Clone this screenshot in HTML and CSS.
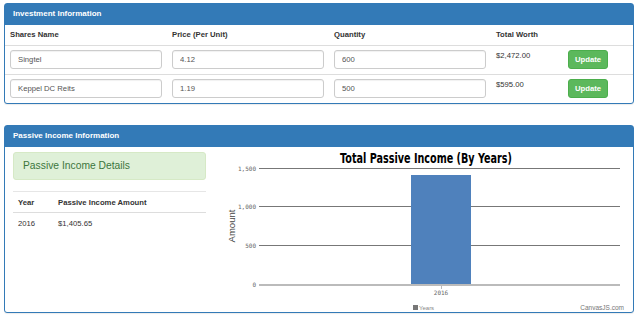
FILE: index.html
```html
<!DOCTYPE html>
<html lang="en">
<head>
    <meta charset="UTF-8">
    <meta name="viewport" content="width=device-width, initial-scale=1.0">
    <title>Investment</title>
    <link rel="stylesheet" href="styles.css">
</head>
<body>
    <div class="panel">
        <div class="panel-heading">Investment Information</div>
        <table class="invest">
            <colgroup>
                <col class="c-wide"><col class="c-wide"><col class="c-wide"><col class="c-worth"><col>
            </colgroup>
            <thead>
                <tr>
                    <th>Shares Name</th>
                    <th>Price (Per Unit)</th>
                    <th>Quantity</th>
                    <th>Total Worth</th>
                    <th></th>
                </tr>
            </thead>
            <tbody>
                <tr>
                    <td><input type="text" value="Singtel"></td>
                    <td><input type="text" value="4.12"></td>
                    <td><input type="text" value="600"></td>
                    <td>$2,472.00</td>
                    <td><button type="button">Update</button></td>
                </tr>
                <tr>
                    <td><input type="text" value="Keppel DC Reits"></td>
                    <td><input type="text" value="1.19"></td>
                    <td><input type="text" value="500"></td>
                    <td>$595.00</td>
                    <td><button type="button">Update</button></td>
                </tr>
            </tbody>
        </table>
    </div>

    <div class="panel">
        <div class="panel-heading">Passive Income Information</div>
        <div class="panel-body">
            <div class="details">
                <div class="alert">Passive Income Details</div>
                <table class="income">
                    <thead>
                        <tr><th class="year">Year</th><th>Passive Income Amount</th></tr>
                    </thead>
                    <tbody>
                        <tr><td>2016</td><td>$1,405.65</td></tr>
                    </tbody>
                </table>
            </div>
            <div class="chart">
                <svg width="403" height="160" viewBox="0 0 403 160">
                    <text class="chart-title" x="204" y="10.5" text-anchor="middle" textLength="172" lengthAdjust="spacingAndGlyphs">Total Passive Income (By Years)</text>

                    <g stroke="#777" stroke-width="1">
                        <line x1="37" x2="398" y1="16.5" y2="16.5"/>
                        <line x1="37" x2="398" y1="54.5" y2="54.5"/>
                        <line x1="37" x2="398" y1="93.5" y2="93.5"/>
                    </g>
                    <g class="axis-label" text-anchor="end">
                        <text x="34" y="18.5">1,500</text>
                        <text x="34" y="56.5">1,000</text>
                        <text x="34" y="95.5">500</text>
                        <text x="34" y="135">0</text>
                    </g>

                    <rect x="189" y="23" width="60" height="110" fill="#4f81bc"/>
                    <line x1="37" x2="398" y1="133" y2="133" stroke="#bbb" stroke-width="2"/>
                    <line x1="219.5" x2="219.5" y1="133" y2="137" stroke="#bbb"/>
                    <text class="axis-label" x="219" y="143" text-anchor="middle">2016</text>

                    <text class="axis-title" transform="translate(12.5 74) rotate(-90)" text-anchor="middle">Amount</text>

                    <rect x="191" y="153" width="5" height="5" fill="#777"/>
                    <text class="legend" x="197" y="158">Years</text>
                    <text class="credit" x="402" y="158" text-anchor="end">CanvasJS.com</text>
                </svg>
            </div>
        </div>
    </div>
</body>
</html>
```

FILE: styles.css
```css
body {
    font-family: "Liberation Sans", Arial, sans-serif;
    font-size: 7.7px;
    line-height: 11px;
    color: #333;
    margin: 3px 6px 0 4px;
    background: #fff;
}
.panel {
    border: 1px solid #337ab7;
    border-radius: 3px;
    box-shadow: 0 1px 1px rgba(0, 0, 0, 0.08);
    margin-bottom: 21px;
    background: #fff;
}
.panel-heading {
    background-color: #337ab7;
    color: #fff;
    font-weight: bold;
    font-size: 8px;
    height: 21px;
    line-height: 20px;
    padding: 0 8px;
}
table {
    border-collapse: collapse;
    width: 100%;
    table-layout: fixed;
}
th {
    text-align: left;
    font-weight: bold;
}
.invest .c-wide {
    width: 162px;
}
.invest .c-worth {
    width: 72px;
}
.invest th {
    padding: 0 5px;
    height: 20px;
    line-height: 20px;
    border-bottom: 1px solid #ddd;
}
.invest td {
    padding: 4px 5px 5px;
    vertical-align: top;
    border-top: 1px solid #ddd;
}
.invest tr:first-child td {
    border-top: none;
}
.invest input {
    display: block;
    box-sizing: border-box;
    width: 100%;
    height: 19px;
    padding: 0 7px;
    border: 1px solid #ccc;
    border-radius: 3px;
    box-shadow: inset 0 1px 1px rgba(0, 0, 0, 0.06);
    font-family: inherit;
    font-size: 7.7px;
    color: #555;
}
.invest button {
    display: block;
    width: 40px;
    height: 19px;
    padding: 0;
    background-color: #5cb85c;
    border: 1px solid #4cae4c;
    border-radius: 3px;
    color: #fff;
    font-family: inherit;
    font-size: 7.7px;
    font-weight: bold;
}
.panel-body {
    display: grid;
    grid-template-columns: 193px 403px;
    column-gap: 16px;
    padding: 5px 8px 0;
}
.alert {
    box-sizing: border-box;
    height: 28px;
    line-height: 26px;
    padding: 0 9px;
    background-color: #dff0d8;
    border: 1px solid #d6e9c6;
    border-radius: 3px;
    color: #3c763d;
    font-size: 10.3px;
}
.income {
    margin-top: 11px;
}
.income th {
    height: 20px;
    padding: 0 5px;
    border-top: 1px solid #e6e6e6;
    border-bottom: 1px solid #ddd;
}
.income .year {
    width: 30px;
}
.income td {
    height: 20px;
    padding: 0 5px;
}
.chart svg {
    display: block;
    overflow: visible;
}
.chart-title {
    font-family: "DejaVu Sans", sans-serif;
    font-weight: bold;
    font-size: 14px;
    fill: #000;
}
.axis-label {
    font-family: "DejaVu Sans Mono", monospace;
    font-size: 6px;
    fill: #666;
}
.axis-title {
    font-family: "Liberation Sans", Arial, sans-serif;
    font-size: 9.5px;
    fill: #444;
}
.legend {
    font-family: "Liberation Sans", Arial, sans-serif;
    font-size: 6px;
    fill: #888;
}
.credit {
    font-family: "Liberation Sans", Arial, sans-serif;
    font-size: 6.5px;
    fill: #777;
}
```
